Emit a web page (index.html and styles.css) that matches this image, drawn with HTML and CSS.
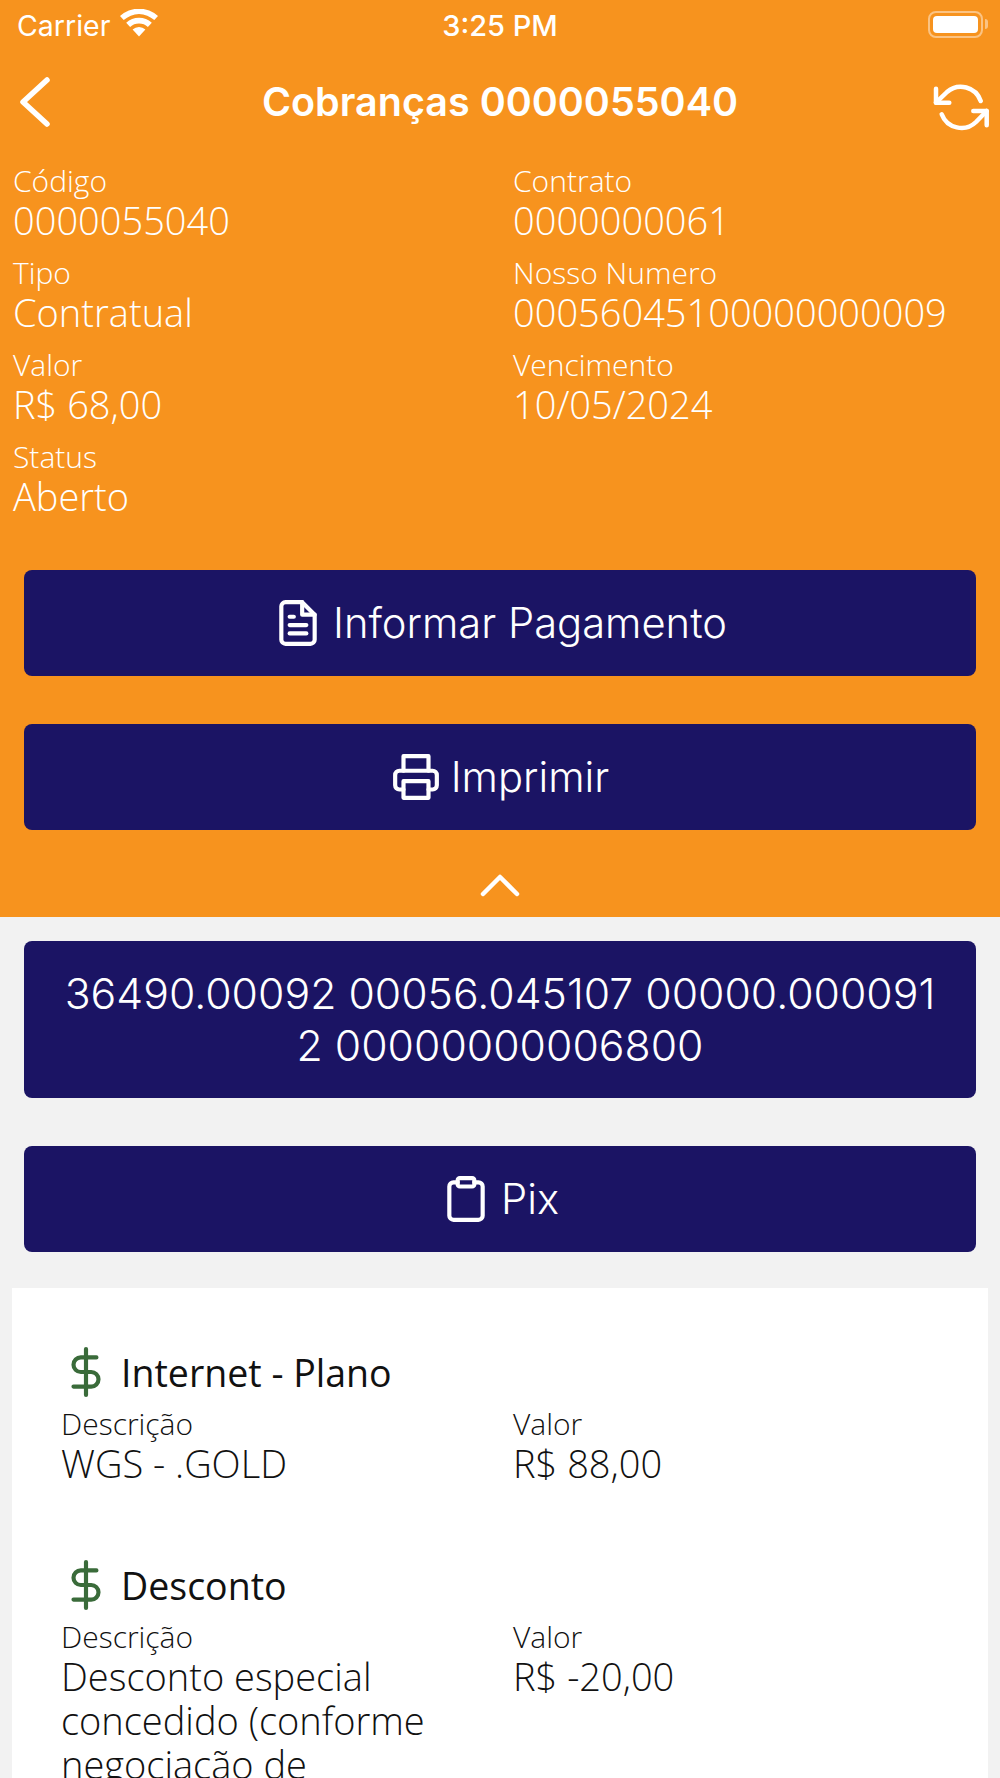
FILE: index.html
```html
<!DOCTYPE html>
<html lang="pt-BR">
<head>
  <meta charset="UTF-8">
  <meta name="viewport" content="width=device-width, initial-scale=1.0">
  <title>Cobranças 0000055040</title>
  <link rel="stylesheet" href="styles.css">
</head>
<body>
  <div class="screen">
    <div class="top">
      <div class="status-bar">
        <div class="status-left">
          <span>Carrier</span>
          <svg class="wifi" viewBox="0 0 38 28"><path d="M19 27.500 12.600 20.600a9.400 9.400 0 0 1 12.800 0z"/><path d="M10.100 18 6.200 13.800a18.800 18.800 0 0 1 25.600 0L27.900 18a13.200 13.200 0 0 0-17.800 0z"/><path d="M3.700 11.100 0 7.100a27.900 27.900 0 0 1 38 0l-3.700 4a22.400 22.400 0 0 0-30.600 0z"/></svg>
        </div>
        <span class="status-time">3:25 PM</span>
        <div class="battery"><div class="battery-fill"></div></div>
      </div>

      <div class="nav">
        <svg class="back" viewBox="0 0 34 52"><polyline points="29,4 5,26 29,48"/></svg>
        <h1>Cobranças 0000055040</h1>
        <svg class="sync" viewBox="0 0 60 50"><path d="M4 4.700V18.700H17.300"/><path d="M4 18.700 15 8A21 21 0 0 1 48.700 17"/><path d="M54.700 41.300V27H41.300"/><path d="M54.700 27 44 38A21 21 0 0 1 9.700 30.300"/></svg>
      </div>

      <div class="info-grid">
        <div class="field"><div class="label">Código</div><div class="value">0000055040</div></div>
        <div class="field"><div class="label">Contrato</div><div class="value">0000000061</div></div>
        <div class="field"><div class="label">Tipo</div><div class="value">Contratual</div></div>
        <div class="field"><div class="label">Nosso Numero</div><div class="value">00056045100000000009</div></div>
        <div class="field"><div class="label">Valor</div><div class="value">R$ 68,00</div></div>
        <div class="field"><div class="label">Vencimento</div><div class="value">10/05/2024</div></div>
        <div class="field"><div class="label">Status</div><div class="value">Aberto</div></div>
      </div>

      <div class="btn btn-first">
        <svg class="icon" viewBox="0 0 24 24"><path d="M14 2H6a2 2 0 0 0-2 2v16a2 2 0 0 0 2 2h12a2 2 0 0 0 2-2V8z"/><polyline points="14 2 14 8 20 8"/><line x1="16" y1="13" x2="8" y2="13"/><line x1="16" y1="17" x2="8" y2="17"/><polyline points="10 9 9 9 8 9"/></svg>
        <span>Informar Pagamento</span>
      </div>
      <div class="btn">
        <svg class="icon" viewBox="0 0 24 24"><polyline points="6 9 6 2 18 2 18 9"/><path d="M6 18H4a2 2 0 0 1-2-2v-5a2 2 0 0 1 2-2h16a2 2 0 0 1 2 2v5a2 2 0 0 1-2 2h-2"/><rect x="6" y="14" width="12" height="8"/></svg>
        <span>Imprimir</span>
      </div>

      <div class="collapse">
        <svg class="chevron" viewBox="0 0 40 24"><polyline points="3,21 20,4 37,21"/></svg>
      </div>
    </div>

    <div class="content">
      <div class="btn btn-code">36490.00092 00056.045107 00000.000091<br>2 00000000006800</div>
      <div class="btn btn-pix">
        <svg class="icon" viewBox="0 0 24 24"><path d="M16 4h2a2 2 0 0 1 2 2v14a2 2 0 0 1-2 2H6a2 2 0 0 1-2-2V6a2 2 0 0 1 2-2h2"/><rect x="8" y="2" width="8" height="4" rx="1" ry="1"/></svg>
        <span>Pix</span>
      </div>

      <div class="card">
        <div class="item">
          <div class="item-title">
            <svg class="dollar" viewBox="0 0 24 24"><line x1="12" y1="1" x2="12" y2="23"/><path d="M17 5H9.500a3.500 3.500 0 0 0 0 7h5a3.500 3.500 0 0 1 0 7H6"/></svg>
            <span>Internet - Plano</span>
          </div>
          <div class="item-grid">
            <div><div class="item-label">Descrição</div><div class="item-value">WGS - .GOLD</div></div>
            <div><div class="item-label">Valor</div><div class="item-value">R$ 88,00</div></div>
          </div>
        </div>
        <div class="item">
          <div class="item-title">
            <svg class="dollar" viewBox="0 0 24 24"><line x1="12" y1="1" x2="12" y2="23"/><path d="M17 5H9.500a3.500 3.500 0 0 0 0 7h5a3.500 3.500 0 0 1 0 7H6"/></svg>
            <span>Desconto</span>
          </div>
          <div class="item-grid">
            <div><div class="item-label">Descrição</div><div class="item-value">Desconto especial concedido (conforme negociação de</div></div>
            <div><div class="item-label">Valor</div><div class="item-value">R$ -20,00</div></div>
          </div>
        </div>
      </div>
    </div>
  </div>
</body>
</html>
```

FILE: styles.css
```css
* {
  box-sizing: border-box;
}

body {
  margin: 0;
  font-family: "Open Sans", sans-serif;
}

svg {
  display: block;
  flex-shrink: 0;
}

.screen {
  width: 1000px;
  height: 1778px;
  overflow: hidden;
  background-color: #f2f2f2;
}

.top {
  height: 917px;
  background-color: #f7931e;
  color: #fff;
}

.status-bar {
  position: relative;
  display: flex;
  justify-content: space-between;
  align-items: center;
  height: 50px;
  padding: 0 17px 0 17px;
  font-family: "Inter", sans-serif;
  font-size: 28.500px;
}

.status-left {
  display: flex;
  align-items: center;
  gap: 10px;
}

.wifi {
  width: 38px;
  height: 28px;
  margin-top: -5px;
  fill: #fff;
}

.status-time {
  position: absolute;
  left: 0;
  right: 0;
  text-align: center;
  font-size: 29px;
  font-weight: 500;
}

.battery {
  position: relative;
  width: 55px;
  height: 27px;
  margin-top: -2px;
  padding: 3px;
  border: 2px solid rgba(255, 255, 255, 0.45);
  border-radius: 8px;
}

.battery::after {
  content: "";
  position: absolute;
  right: -7px;
  top: 6px;
  width: 3px;
  height: 10px;
  background-color: rgba(255, 255, 255, 0.45);
  border-radius: 0 3px 3px 0;
}

.battery-fill {
  height: 100%;
  background-color: #fff;
  border-radius: 4px;
}

.nav {
  display: grid;
  grid-template-columns: 1fr auto 1fr;
  align-items: center;
  height: 104px;
  padding: 0 8px;
}

.nav h1 {
  margin: 0;
  font-family: "Inter", sans-serif;
  font-size: 39.500px;
  font-weight: 600;
}

.back {
  width: 34px;
  height: 52px;
  margin-left: 10px;
  fill: none;
  stroke: #fff;
  stroke-width: 5.500;
  stroke-linecap: round;
  stroke-linejoin: round;
}

.sync {
  justify-self: end;
  width: 60px;
  height: 50px;
  margin-top: 14px;
  fill: none;
  stroke: #fff;
  stroke-width: 4.500;
  stroke-linecap: round;
  stroke-linejoin: round;
}

.info-grid {
  display: grid;
  grid-template-columns: 500px 1fr;
  padding: 8px 0 0 13px;
}

.field {
  height: 92px;
}

.label {
  font-size: 30px;
  line-height: 38px;
  font-weight: 300;
}

.value {
  font-size: 38px;
  line-height: 40px;
  font-weight: 300;
}

.btn {
  display: flex;
  justify-content: center;
  align-items: center;
  gap: 10px;
  height: 106px;
  margin: 48px 24px 0;
  background-color: #1b1464;
  border-radius: 8px;
  color: #fff;
  font-family: "Inter", sans-serif;
  font-size: 41.700px;
  font-weight: 350;
}

.btn-first {
  margin-top: 40px;
}

.icon {
  width: 50px;
  height: 50px;
  fill: none;
  stroke: #fff;
  stroke-width: 2;
  stroke-linecap: round;
  stroke-linejoin: round;
}

.collapse {
  display: flex;
  justify-content: center;
  padding-top: 43px;
}

.chevron {
  width: 40px;
  height: 24px;
  fill: none;
  stroke: #fff;
  stroke-width: 4.500;
  stroke-linecap: round;
  stroke-linejoin: round;
}

.content {
  padding-top: 24px;
}

.btn-code {
  height: 157px;
  margin-top: 0;
  text-align: center;
  font-size: 42.750px;
  line-height: 52px;
}

.btn-pix {
  margin-top: 48px;
}

.card {
  min-height: 600px;
  margin: 36px 12px 0;
  padding: 58px 49px 0;
  background-color: #fff;
  color: #111;
}

.item {
  margin-bottom: 74px;
}

.item-title {
  display: flex;
  align-items: center;
  gap: 10px;
  height: 52px;
  font-size: 37.500px;
}

.dollar {
  width: 50px;
  height: 52px;
  margin-left: 0;
  fill: none;
  stroke: #3a6b3a;
  stroke-width: 2;
  stroke-linecap: round;
  stroke-linejoin: round;
}

.item-grid {
  display: grid;
  grid-template-columns: 452px 1fr;
  margin-top: 9px;
}

.item-label {
  font-size: 30px;
  line-height: 34px;
  font-weight: 300;
  color: #111;
}

.item-value {
  width: 380px;
  font-size: 38px;
  line-height: 44px;
  font-weight: 300;
}
```
